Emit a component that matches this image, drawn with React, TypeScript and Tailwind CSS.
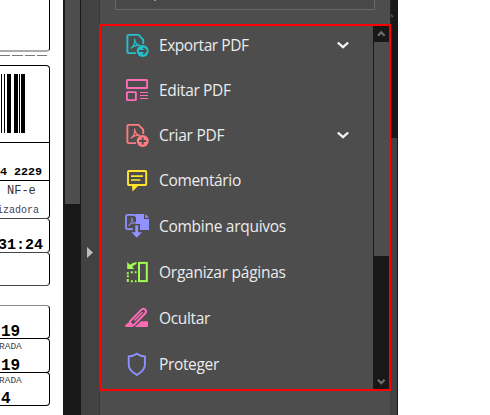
import React from "react";

const svg = "block size-6 shrink-0 overflow-visible";
const swirl = "M4.6 15.4C7.6 13.4 9.2 9.8 8.6 5.6C9 10 11 12.4 14.2 12.2C10.5 11.8 7.5 13 4.6 15.4";

function PageBadge({ color, badge }: { color: string; badge: string }) {
  return (
    <svg className={svg} viewBox="0 0 24 24" fill="none" stroke={color}>
      <path d="M10 20.1H2.5Q1.4 20.1 1.4 19V3Q1.4 1.9 2.5 1.9H12.5L17.2 6.6V11" strokeWidth="1.9" />
      <path d={swirl} strokeWidth="1.2" />
      <circle cx="16.7" cy="18" r="6" fill={color} stroke="none" />
      <path d={badge} stroke="#4d4d4d" strokeWidth="1.8" />
    </svg>
  );
}

const exportIcon = <PageBadge color="#24c0ca" badge="M13 18H20M17.2 14.8L20.2 18L17.2 21.2" />;
const createIcon = <PageBadge color="#ff7b82" badge="M13.2 18H20.2M16.7 14.5V21.5" />;

const editIcon = (
  <svg className={svg} viewBox="0 0 24 24" fill="none" stroke="#ff6bb5">
    <rect x="0.9" y="2" width="20.2" height="8" rx="0.6" strokeWidth="1.9" />
    <rect x="0.9" y="14.1" width="9" height="8" rx="0.6" strokeWidth="1.9" />
    <path d="M14 14.5H22M14 17.5H22M14 20.5H22" strokeWidth="1.1" />
  </svg>
);

const commentIcon = (
  <svg className={svg} viewBox="0 0 24 24" fill="none" stroke="#ffe52e">
    <rect x="2" y="3" width="18.2" height="14" rx="0.8" strokeWidth="1.9" />
    <path d="M6 17H13L6.5 23.4Z" fill="#ffe52e" stroke="none" />
    <path d="M5 8.1H17M5 12H14.3" strokeWidth="1.7" />
  </svg>
);

const combineIcon = (
  <svg className={svg} viewBox="0 0 24 24" fill="none" stroke="#9292ff">
    <path d="M7 15.1H1.5Q0 15.1 0 13.6V2.4Q0 0.9 1.5 0.9H8.5L12 4" strokeWidth="1.8" />
    <path d="M10 0H18V5H23V16H14V10H10Z" fill="#9292ff" stroke="none" />
    <path d="M19.3 0L23 3.8H19.3Z" fill="#9292ff" stroke="none" />
    <path d="M2.5 11.5C5 9.8 6 7 5.8 4.2C6 7.2 7.8 9 10 9C7 8.8 5 9.6 2.5 11.5" strokeWidth="0.9" />
    <path d="M9 11H12.4V18H16.6L10.7 24L4.8 18H9Z" fill="#9292ff" stroke="#4d4d4d" strokeWidth="0.6" />
  </svg>
);

const organizeIcon = (
  <svg className={svg} viewBox="0 0 24 24" fill="none" stroke="#a3fa50">
    <rect x="13" y="2.9" width="7.8" height="18.2" strokeWidth="2" />
    <path d="M0.8 13.2H2.8M4.8 12.2H6.8M8.8 12.2H10.6M1.8 15.2V17.2M1.8 19V22M4.8 21.2H6.8M8.8 21.2H10.6" strokeWidth="2" />
    <path d="M1.2 2V9H8.4L6.2 7Q7.5 5 10.5 3.9V1.9Q6.5 2.5 4 4.8Z" fill="#a3fa50" stroke="none" />
  </svg>
);

const redactIcon = (
  <svg className={svg} viewBox="0 0 24 24" fill="none" stroke="#ff6bb5">
    <path d="M-0.6 21V19L4 15.4L8 20L7 21Z" fill="#ff6bb5" stroke="none" />
    <path d="M9 21L15 15.2H21Q22 15.2 22 16.2V20Q22 21 21 21Z" fill="#ff6bb5" stroke="none" />
    <path d="M4 15.4L15.7 3.4Q17.3 2 19 3.4Q21 5 19.5 7L8 19L4.7 18.6Z" strokeWidth="2" />
    <path d="M8.3 14.5L16.5 6.2" strokeWidth="1.6" />
  </svg>
);

const shieldIcon = (
  <svg className={svg} viewBox="0 0 24 24" fill="none" stroke="#9090ff" strokeWidth="1.9">
    <path d="M10.8 1.7Q7.2 4.2 2.7 4.4V13Q2.9 18.4 10.8 22.9Q18.7 18.4 18.9 13V4.4Q14.4 4.2 10.8 1.7Z" />
  </svg>
);

const tools = [
  { label: "Exportar PDF", icon: exportIcon, more: true, cls: "mb-[21px] tracking-[-0.45px]" },
  { label: "Editar PDF", icon: editIcon, more: false, cls: "mb-[21px] tracking-[-0.35px]" },
  { label: "Criar PDF", icon: createIcon, more: true, cls: "mb-[21px] tracking-[-0.25px]" },
  { label: "Comentário", icon: commentIcon, more: false, cls: "mb-[22px] tracking-[-0.35px]" },
  { label: "Combine arquivos", icon: combineIcon, more: false, cls: "mb-[22px] tracking-[-0.28px]" },
  { label: "Organizar páginas", icon: organizeIcon, more: false, cls: "mb-[22px] tracking-[-0.25px]" },
  { label: "Ocultar", icon: redactIcon, more: false, cls: "mb-[22px] tracking-[-0.35px]" },
  { label: "Proteger", icon: shieldIcon, more: false, cls: "tracking-[-0.35px]" },
];

function ScrollArrow({ down = false }: { down?: boolean }) {
  return (
    <svg className="block h-4 w-4" viewBox="0 0 16 16" fill="none" stroke="#707070" strokeWidth="2.2">
      <path d={down ? "M5 6.8L8.3 10.2L11.6 6.8" : "M5 9.7L8.3 6.3L11.6 9.7"} />
    </svg>
  );
}

function DocumentPage() {
  return (
    <div className="flex w-[50px] shrink-0 flex-col whitespace-nowrap font-['Liberation_Mono',monospace] leading-none text-black">
      <div className="h-[52px] shrink-0 rounded-br-[4px] border-r border-b-2 border-r-black border-b-[#aaa]" />
      <div className="mt-[3px] flex h-px shrink-0 gap-[2px] pr-[3px]">
        <div className="w-[10px] bg-[#777]" />
        <div className="w-[11px] bg-[#777]" />
        <div className="w-[11px] bg-[#777]" />
        <div className="w-[10px] bg-[#777]" />
      </div>
      <div className="mt-[9px] h-[154px] shrink-0 rounded-r-[4px] border-y border-r border-black">
        <div className="flex h-[77px] border-b border-black pt-2">
          <div className="ml-px h-[59px] w-px bg-black" />
          <div className="ml-[2px] h-[59px] w-px bg-black" />
          <div className="ml-[2px] h-[59px] w-1 bg-black" />
          <div className="ml-[3px] h-[59px] w-1 bg-black" />
          <div className="ml-px h-[59px] w-px bg-black" />
          <div className="ml-px h-[59px] w-1 bg-black" />
        </div>
        <div className="h-[38px] border-b border-black pt-[24px] text-[11.7px] font-bold">4 2229</div>
        <div className="pt-[4px] pl-[7px] text-[12px] text-[#333]">NF-e</div>
        <div className="-ml-[3px] pt-[9px] text-[10px] text-[#445]">izadora</div>
      </div>
      <div className="-mt-px flex h-[35px] shrink-0 justify-end rounded-r-[4px] border-y border-r border-x-black border-y-[#444] pt-[19px] pr-[6px] text-[15px] font-bold">
        31:24
      </div>
      <div className="-mt-px h-[34px] shrink-0 rounded-r-[4px] border-y border-r border-x-black border-y-[#444]" />
      <div className="mt-[19px] h-[34px] shrink-0 rounded-r-[4px] border-y border-r border-x-black border-t-[#888] border-b-black pt-[18px] pl-[1px] text-[16px] font-bold">
        19
      </div>
      <div className="-mt-px h-[35px] shrink-0 rounded-r-[4px] border-y border-r border-black">
        <div className="-ml-px pt-[3px] text-[9.5px] text-[#444]">RADA</div>
        <div className="pt-[6px] pl-[1px] text-[16px] font-bold">19</div>
      </div>
      <div className="-mt-px h-[34px] shrink-0 rounded-r-[4px] border-y border-r border-black">
        <div className="-ml-px pt-[3px] text-[9.5px] text-[#444]">RADA</div>
        <div className="pt-[5px] pl-[1px] text-[16px] font-bold">4</div>
      </div>
    </div>
  );
}

export default function App() {
  return (
    <div className="flex h-[415px] w-[490px] overflow-hidden bg-white">
      <DocumentPage />
      <div className="ml-[13px] w-[18px] shrink-0 bg-[#181818] pr-px pl-[2px]">
        <div className="h-[204px] bg-[#4d4d4d]" />
      </div>
      <div className="flex w-[18px] shrink-0 bg-[#424242] pt-[247px] pl-[6px]">
        <svg className="h-[11px] w-[6px]" viewBox="0 0 6 11" fill="#bdbdbd">
          <path d="M0 0L6 5.5L0 11Z" />
        </svg>
      </div>
      <div className="flex w-[292px] shrink-0 flex-col bg-[#4d4d4d]">
        <div className="h-6 shrink-0 border-l border-l-[#393939] border-r border-r-[#242424] pl-[15px]">
          <div className="h-[10px] w-[260px] border-x border-b border-[#686868] bg-[#484848] pl-[38px]">
            <div className="h-px w-[2px] bg-[#999]" />
          </div>
        </div>
        <div className="flex h-[367px] shrink-0 border-2 border-[#ff0000]">
          <div className="flex min-w-0 flex-1 flex-col pt-[7px] pl-[25px]">
            {tools.map((tool) => (
              <div
                key={tool.label}
                className={"flex h-6 shrink-0 items-center font-['Open_Sans','Noto_Sans',sans-serif] text-[15.5px] whitespace-nowrap text-[#ececec] " + tool.cls}
              >
                {tool.icon}
                <span className="ml-[9px] pt-[2px]">{tool.label}</span>
                {tool.more && (
                  <svg className="mr-[24px] ml-auto h-[8px] w-[12px]" viewBox="0 0 12 8" fill="none" stroke="#f4f4f4" strokeWidth="2.3">
                    <path d="M0.8 1.5L6 6.2L11.2 1.5" />
                  </svg>
                )}
              </div>
            ))}
          </div>
          <div className="flex w-4 shrink-0 flex-col bg-[#181818]">
            <ScrollArrow />
            <div className="ml-px h-[214px] bg-[#4d4d4d]" />
            <div className="mt-auto">
              <ScrollArrow down />
            </div>
          </div>
        </div>
        <div className="h-6 shrink-0 border-x border-l-[#393939] border-r-[#424242]" />
      </div>
      <div className="flex w-[7px] shrink-0 flex-col border-r border-[#181818] bg-[#181818]">
        <svg className="h-[138px] w-[6px] shrink-0" viewBox="0 0 6 138" fill="none" stroke="#555" strokeWidth="1.6">
          <path d="M-2 13L2 17" />
        </svg>
        <div className="flex-1 bg-[#424242]" />
      </div>
    </div>
  );
}
